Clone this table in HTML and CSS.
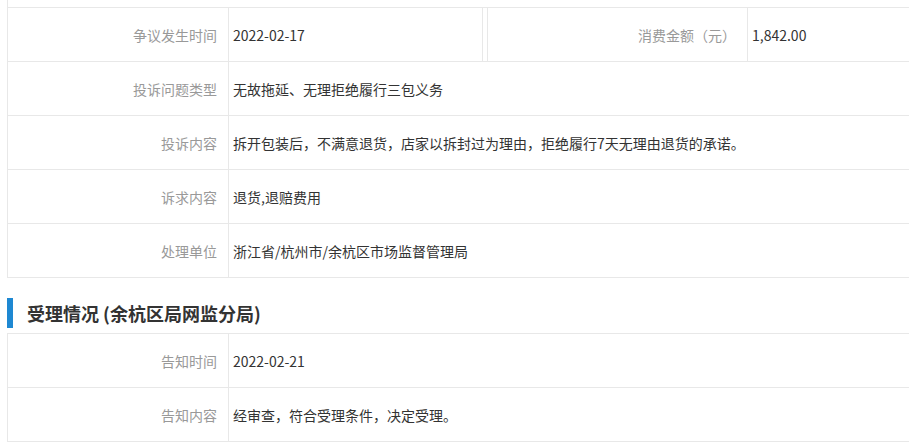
FILE: index.html
```html
<!DOCTYPE html>
<html lang="zh-CN">
<head>
<meta charset="utf-8">
<link rel="stylesheet" href="styles.css">
</head>
<body>
<div class="page">
  <div class="table">
    <div class="stub"></div>
    <div class="row row-split">
      <div class="label">争议发生时间</div>
      <div class="value v-mid">2022-02-17</div>
      <div class="label label-2">消费金额（元）</div>
      <div class="value">1,842.00</div>
    </div>
    <div class="row">
      <div class="label">投诉问题类型</div>
      <div class="value">无故拖延、无理拒绝履行三包义务</div>
    </div>
    <div class="row">
      <div class="label">投诉内容</div>
      <div class="value">拆开包装后，不满意退货，店家以拆封过为理由，拒绝履行7天无理由退货的承诺。</div>
    </div>
    <div class="row">
      <div class="label">诉求内容</div>
      <div class="value">退货,退赔费用</div>
    </div>
    <div class="row">
      <div class="label">处理单位</div>
      <div class="value">浙江省/杭州市/余杭区市场监督管理局</div>
    </div>
  </div>

  <h2 class="section-title">受理情况 (余杭区局网监分局)</h2>

  <div class="table table-top">
    <div class="row">
      <div class="label">告知时间</div>
      <div class="value">2022-02-21</div>
    </div>
    <div class="row">
      <div class="label">告知内容</div>
      <div class="value">经审查，符合受理条件，决定受理。</div>
    </div>
  </div>
</div>
</body>
</html>
```

FILE: styles.css
```css
html, body {
  margin: 0;
  padding: 0;
  overflow: hidden;
  background: #fff;
}
body {
  font-family: "Microsoft YaHei", "Noto Sans CJK SC", "Noto Sans", sans-serif;
  font-size: 14px;
  color: #333;
}
.page {
  padding-left: 7px;
  width: 930px;
}
.table {
  border-left: 1px solid #e8e8e8;
}
.table-top {
  border-top: 1px solid #e8e8e8;
}
.stub {
  height: 7px;
  border-bottom: 1px solid #e8e8e8;
}
.row {
  display: grid;
  grid-template-columns: 221px 1fr;
  height: 53px;
  border-bottom: 1px solid #e8e8e8;
}
.row-split {
  grid-template-columns: 221px 254px 265px 1fr;
}
.label {
  display: flex;
  align-items: center;
  justify-content: flex-end;
  padding-right: 11px;
  color: #999;
  border-right: 1px solid #e8e8e8;
  white-space: nowrap;
}
.value {
  display: flex;
  align-items: center;
  padding-left: 4px;
  white-space: nowrap;
}
.v-mid {
  border-right: 1px solid #e8e8e8;
}
.label-2 {
  margin-left: 4px;
  border-left: 1px solid #e8e8e8;
}
.section-title {
  margin: 20px 0 5px 0;
  height: 30px;
  display: flex;
  align-items: center;
  border-left: 6px solid #1e88d2;
  padding-left: 14px;
  font-size: 18px;
  font-weight: bold;
  color: #333;
}
```
